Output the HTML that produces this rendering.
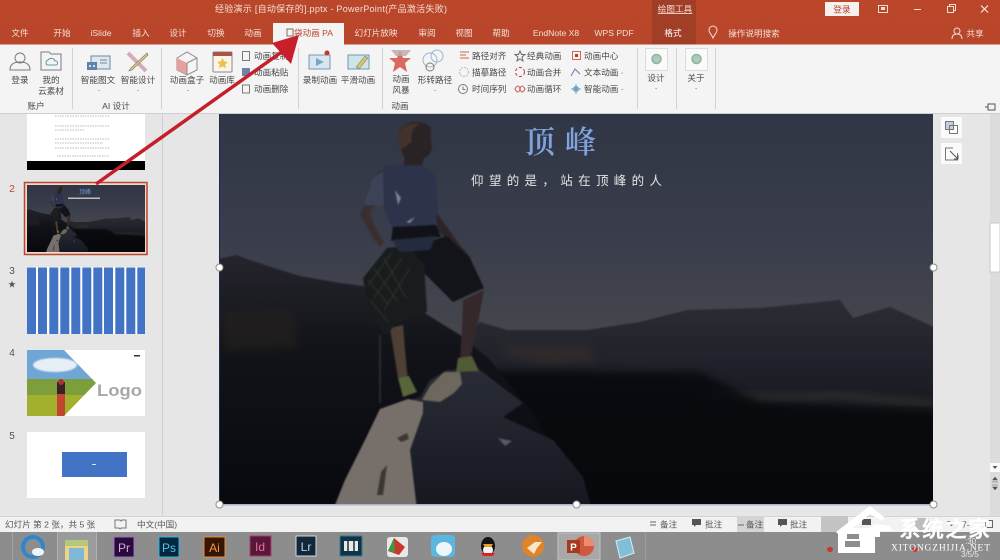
<!DOCTYPE html>
<html lang="zh"><head><meta charset="utf-8"><title>PowerPoint</title>
<style>
html,body{margin:0;padding:0;width:1000px;height:560px;overflow:hidden;background:#e6e6e6}
svg{display:block;font-family:"Liberation Sans","Noto Sans CJK SC",sans-serif}
.t{font-size:8.6px;fill:#f5dfd8}
.r{font-size:8.6px;fill:#4a4a4a}
.m{text-anchor:middle}
.s{font-size:8.6px;fill:#555}
.i{fill:none;stroke:#7b7b7b;stroke-width:1}
</style></head><body>
<svg width="1000" height="560" viewBox="0 0 1000 560" xmlns="http://www.w3.org/2000/svg">
<defs>
<linearGradient id="sky" x1="0" y1="0" x2="0" y2="1"><stop offset="0" stop-color="#2f3544"/><stop offset=".3" stop-color="#383c4b"/><stop offset=".55" stop-color="#44464d"/><stop offset="1" stop-color="#4a4b4e"/></linearGradient>
<linearGradient id="leftm" x1="0" y1="0" x2="0" y2="1"><stop offset="0" stop-color="#25242c"/><stop offset=".35" stop-color="#121319"/><stop offset="1" stop-color="#07080c"/></linearGradient>
<linearGradient id="range" x1="0" y1="0" x2="0" y2="1"><stop offset="0" stop-color="#2b2c34"/><stop offset=".35" stop-color="#1d1f28"/><stop offset=".55" stop-color="#14161a"/><stop offset="1" stop-color="#06070b"/></linearGradient>
<linearGradient id="rockd" x1="0" y1="0" x2="0" y2="1"><stop offset="0" stop-color="#292c36"/><stop offset="1" stop-color="#15171f"/></linearGradient>
<linearGradient id="tb" x1="0" y1="0" x2="0" y2="1"><stop offset="0" stop-color="#bb472a"/><stop offset="1" stop-color="#b8462b"/></linearGradient>
<filter id="soft" x="-5%" y="-5%" width="110%" height="110%" color-interpolation-filters="sRGB"><feGaussianBlur stdDeviation="0.9"/></filter>
<filter id="soft2" x="-20%" y="-20%" width="140%" height="140%" color-interpolation-filters="sRGB"><feGaussianBlur stdDeviation="4"/></filter>
<clipPath id="sl"><rect x="220" y="114" width="713" height="391"/></clipPath>
<clipPath id="t2"><rect x="27" y="185" width="118" height="67"/></clipPath>
<clipPath id="c4"><path d="M27 350h37l32 33-32 33H27z"/></clipPath>
<g id="scene">
<g filter="url(#soft)">
<rect x="205" y="100" width="745" height="420" fill="url(#sky)"/>
<path d="M460 345L480 322 507 330 587 330 640 322 687 310 760 308 840 300 853 318 890 307 945 332V520H460z" fill="url(#range)"/>
<path d="M503 345l84 0 10 16-50 4-40-8z" fill="#3c3129" opacity=".5" filter="url(#soft2)"/>
<path d="M700 392l60 6 80-2 93 8" stroke="#3a4135" stroke-width="7" fill="none" opacity=".55" filter="url(#soft2)"/>
<path d="M470 370L700 372 760 402 945 412V520H470z" fill="#07080c" opacity=".85" filter="url(#soft2)"/>
<path d="M205 262L236 255 265 265 300 276 340 283 363 286 400 296 423 312 460 335 490 360 530 410 600 520H205z" fill="url(#leftm)"/>
<path d="M223 312l70-2 4 38-74 4z" fill="#2e281f" opacity=".4" filter="url(#soft2)"/>
<path d="M335 505L345 480 365 440 380 409 420 397 430 380 447 370 480 370 523 403 503 417 553 440 583 477 592 510H335z" fill="url(#rockd)"/>
<path d="M333 510L345 480 365 440 380 409 408 399 423 402 423 413 410 450 417 510z" fill="#77706a"/>
<path d="M422 400l8-14 14-14 16 0 2 12-8 9-14 9z" fill="#6d675d"/>
<path d="M381 472l6-7-4 30-6 0zM397 438l10-5 2 6-8 3z" fill="#3b3733"/>
<path d="M498 438l14 3-7 5z" fill="#565961"/>
<path d="M380 335v68" stroke="#2f3137" stroke-width="1.500"/>
<path d="M390 328L403 325 405 350 408 382 398 378z" fill="#4e4035"/>
<path d="M398 378L409 376 417 392 403 397z" fill="#59653b"/>
<path d="M463 300L484 290 477 328 470 360 460 360 462 328z" fill="#35282a"/>
<path d="M458 358L472 356 479 371 456 372z" fill="#515b35"/>
<path d="M366 200L360 215 373 238 380 247 384 242 374 225 370 212 376 203z" fill="#3a2e30"/>
<path d="M436 212L460 245 471 258 458 253 437 229z" fill="#2c2428"/>
<path d="M407 248L447 236 470 258 484 288 453 302 423 272z" fill="#131419"/>
<path d="M363 278L387 248 408 246 424 264 427 312 397 322 387 335 370 318z" fill="#191c1c"/>
<g stroke="#39433a" stroke-width="1" fill="none" opacity=".6"><path d="M368 280l20 24M374 268l24 34M384 258l22 40M370 300l18 22M392 252l-24 34M402 258l-28 40M410 268l-26 42"/></g>
<path d="M362 205L373 178 387 165 420 163 435 175 438 205 435 232 393 230 383 206z" fill="#2c334a"/>
<path d="M363 205L373 178 383 172 384 206z" fill="#3d4356"/>
<path d="M393 227L436 225 441 237 391 241z" fill="#111218"/>
<path d="M392 240L436 236 430 250 400 252z" fill="#252b3f"/>
<path d="M395 190l6 8-3 7zM406 222l9-5-5 6z" fill="#7c8396"/>
<path d="M403 165C406 160 404 158 402 152 397 145 397 130 403 126 411 120 426 121 431 128 430 134 431 140 432 148 431 153 428 157 424 158L422 165z" fill="#2a2326"/>
<path d="M400 150c-4-9-2-22 6-25 6-2 10-2 14-1-8 4-10 10-8 17-3 3-6 6-12 9z" fill="#41322d"/>
</g>
</g>
</defs>

<rect width="1000" height="560" fill="#e6e6e6"/>

<rect width="1000" height="44.500" fill="url(#tb)"/>
<rect x="652" y="0" width="44" height="44.500" fill="#a03f26"/>
<text x="215" y="12" class="t" style="font-size:9px" textLength="232">经验演示 [自动保存的].pptx  -  PowerPoint(产品激活失败)</text>
<text x="675" y="12" class="t m" style="text-decoration:underline">绘图工具</text>
<rect x="825" y="2" width="34" height="14" fill="#f6f0ee"/>
<text x="842" y="12.500" class="m" style="font-size:8.6px;fill:#b8472b">登录</text>
<rect x="878.500" y="5.500" width="9" height="7" fill="none" stroke="#f3dcd5"/><rect x="881" y="7" width="4" height="3" fill="#f3dcd5"/>
<rect x="914" y="9" width="7" height="1" fill="#f3dcd5"/>
<rect x="947.500" y="6.500" width="6" height="6" fill="none" stroke="#f3dcd5"/><path d="M949.500 6.500V4.500H955.500V10.500H953.500" fill="none" stroke="#f3dcd5"/>
<path d="M981 5.500L988 12.500M988 5.500L981 12.500" stroke="#f6e6e1" stroke-width="1.200"/>

<text x="20" y="36" class="t m">文件</text>
<text x="62" y="36" class="t m">开始</text>
<text x="101" y="36" class="t m">iSlide</text>
<text x="141" y="36" class="t m">插入</text>
<text x="178" y="36" class="t m">设计</text>
<text x="216" y="36" class="t m">切换</text>
<text x="253" y="36" class="t m">动画</text>
<rect x="273" y="23" width="71" height="22" fill="#f4f4f4"/>
<rect x="287" y="29" width="6" height="7" fill="none" stroke="#8a6a60"/>
<text x="294" y="36" style="font-size:8.6px;fill:#b8472b">袋动画 PA</text>
<text x="376" y="36" class="t m">幻灯片放映</text>
<text x="427" y="36" class="t m">审阅</text>
<text x="464" y="36" class="t m">视图</text>
<text x="501" y="36" class="t m">帮助</text>
<text x="556" y="36" class="t m">EndNote X8</text>
<text x="614" y="36" class="t m">WPS PDF</text>
<text x="673" y="36" class="t m" style="fill:#fff">格式</text>
<path d="M713 38c-1-3-4-5-4-8a4 4 0 0 1 8 0c0 3-3 5-4 8z" fill="none" stroke="#f3dcd5"/>
<text x="754" y="36.500" class="t m">操作说明搜索</text>
<circle cx="957" cy="31" r="3" fill="none" stroke="#f3dcd5"/><path d="M952 39c0-3.500 2-5 5-5s5 1.500 5 5" fill="none" stroke="#f3dcd5"/>
<text x="975" y="36.500" class="t m">共享</text>

<rect y="44.500" width="1000" height="68.500" fill="#f4f4f4"/>
<rect y="113" width="1000" height="1" fill="#cfcfcf"/>
<g fill="#d2d2d2">
<rect x="72" y="48" width="1" height="61"/><rect x="161" y="48" width="1" height="61"/><rect x="298" y="48" width="1" height="61"/><rect x="382" y="48" width="1" height="61"/><rect x="637" y="48" width="1" height="61"/><rect x="676" y="48" width="1" height="61"/><rect x="715" y="48" width="1" height="61"/>
</g>
<circle cx="20" cy="58" r="5" class="i"/><path d="M10 70c0-6 4-8 10-8s10 2 10 8z" class="i"/>
<path d="M41 52h8l2 2h10v16h-20z" class="i" fill="#f8f8f8"/><path d="M47 65a3 3 0 0 1 1-5 4 4 0 0 1 7 1 2 2 0 0 1 1 4z" fill="none" stroke="#5f9ab0"/>
<rect x="91" y="56" width="19" height="13" fill="#dfe7ef" stroke="#6d8aa5"/><rect x="87" y="62" width="10" height="8" fill="#5b85ad"/><circle cx="90" cy="66" r="1" fill="#fff"/><circle cx="94" cy="66" r="1" fill="#fff"/><path d="M100 60h7M100 63h7" stroke="#6d8aa5"/>
<path d="M128 53l18 18" stroke="#d7a9bd" stroke-width="4"/><path d="M147 53l-16 15-2 3 3-1 16-15z" fill="#e9c66f" stroke="#7f7f7f" stroke-width=".7"/>
<path d="M177 58l10-6 10 6v12l-10 5-10-5z" fill="#f5f5f5" stroke="#8a8a8a"/><path d="M177 58l10 5v12l-10-5z" fill="#e9a09c"/><path d="M187 63l10-5M187 63v12" stroke="#8a8a8a"/>
<rect x="213" y="52" width="19" height="20" rx="1" fill="#fbf5e6" stroke="#8a8a8a"/><rect x="213" y="52" width="19" height="4" fill="#a8564b"/><path d="M222.500 58l1.700 3.400 3.800.5-2.800 2.600.7 3.700-3.400-1.800-3.400 1.800.7-3.700-2.800-2.600 3.800-.5z" fill="#e8c24e"/>
<rect x="242.500" y="51.500" width="7" height="9" class="i"/><rect x="242" y="68" width="8" height="8" fill="#6f83a8"/><rect x="242.500" y="85" width="7" height="8" class="i"/>
<text x="254" y="59" class="r">动画复制</text><text x="254" y="75.500" class="r">动画粘贴</text><text x="254" y="92" class="r">动画删除</text>
<rect x="309" y="55" width="21" height="14" fill="#d9e6ef" stroke="#6e9bb5"/><path d="M316 58l8 4-8 4z" fill="#7ba5c5"/><circle cx="327" cy="53" r="2.500" fill="#c0392b"/>
<rect x="348" y="55" width="21" height="14" fill="#cfe4e6" stroke="#6e9bb5"/><path d="M356 67l9-11 3 2-9 11z" fill="#d8c06c" stroke="#666" stroke-width=".5"/>
<path d="M400 50l3 8h8l-6 5 2 9-7-5-7 5 2-9-6-5h8z" fill="#d96a61"/><path d="M391 50h20l-5 6h-10z" fill="#b9a9a9" opacity=".8"/>
<circle cx="437" cy="56" r="6" class="i" style="stroke:#9bb5d2"/><circle cx="430" cy="60" r="7" class="i" style="stroke:#9bb5d2"/><circle cx="430" cy="67" r="4" class="i"/>
<text x="320" y="83" class="r m">录制动画</text><text x="358" y="83" class="r m">平滑动画</text>
<text x="401" y="82" class="r m">动画</text><text x="401" y="93" class="r m">风暴</text><text x="435" y="83" class="r m">形转路径</text><text x="435" y="93" class="r m">·</text>
<text x="400" y="109" class="r m">动画</text>
<text x="20" y="83" class="r m">登录</text><text x="51" y="83" class="r m">我的</text><text x="51" y="94" class="r m">云素材</text>
<text x="36" y="109" class="r m">账户</text>
<text x="98" y="83" class="r m">智能图文</text><text x="138" y="83" class="r m">智能设计</text><text x="99" y="93" class="r m">·</text><text x="138" y="93" class="r m">·</text>
<text x="116" y="109" class="r m">AI 设计</text>
<text x="187" y="83" class="r m">动画盒子</text><text x="222" y="83" class="r m">动画库</text><text x="188" y="93" class="r m">·</text>
<path d="M460 52h9M460 55h6M460 58h9" stroke="#c86a4a"/><circle cx="464" cy="72" r="4.500" class="i" style="stroke:#a9bbd3;stroke-dasharray:2 1"/><circle cx="463" cy="89" r="4.500" class="i"/><path d="M463 86.500v3h2.500" class="i"/>
<text x="472" y="59" class="r">路径对齐</text><text x="472" y="75.500" class="r">描摹路径</text><text x="472" y="92" class="r">时间序列</text>
<path d="M520 51l1.500 3.500h3.500l-3 2.500 1 4-3-2-3 2 1-4-3-2.500h3.500z" fill="none" stroke="#6b6b6b"/><circle cx="520" cy="72" r="4.500" fill="none" stroke="#c0392b" stroke-dasharray="3 2"/><path d="M515 89c2-4 4-4 5 0s3 4 5 0c-2-4-4-4-5 0s-3 4-5 0z" fill="none" stroke="#c95a4a"/>
<text x="527" y="59" class="r">经典动画</text><text x="527" y="75.500" class="r">动画合并</text><text x="527" y="92" class="r">动画循环</text>
<rect x="572.500" y="51.500" width="8" height="8" fill="none" stroke="#c96a5a"/><rect x="575" y="54" width="3" height="3" fill="#c0392b"/><path d="M571 76l4-7 5 5" fill="none" stroke="#8a6fb0"/><circle cx="576" cy="89" r="3" fill="#6ba8c9"/><path d="M576 84v10M571 89h10" stroke="#6ba8c9"/>
<text x="584" y="59" class="r">动画中心</text><text x="584" y="75.500" class="r">文本动画 ·</text><text x="584" y="92" class="r">智能动画 ·</text>
<rect x="645.500" y="48.500" width="22" height="22" fill="#fafafa" stroke="#dcdcdc"/><circle cx="656.500" cy="59" r="4.500" fill="#a9cdb8" stroke="#8fb3a0" stroke-width="1.500"/>
<rect x="685.500" y="48.500" width="22" height="22" fill="#fafafa" stroke="#dcdcdc"/><circle cx="696.500" cy="59" r="4.500" fill="#a9cdb8" stroke="#8fb3a0" stroke-width="1.500"/>
<text x="656" y="81" class="r m">设计</text><text x="656" y="91" class="r m">·</text><text x="696" y="81" class="r m">关于</text><text x="696" y="91" class="r m">·</text>
<path d="M985 107h3M988 104v6h7v-6z" fill="none" stroke="#555"/>

<rect x="162" y="114" width="1" height="403" fill="#cfcfcf"/>
<rect x="27" y="114" width="118" height="47" fill="#fff"/><rect x="27" y="161" width="118" height="9" fill="#000"/>
<g stroke="#a5a5a5" stroke-width=".8" stroke-dasharray="1.500 1">
<path d="M55 116h55M55 126h55M55 130h30M55 139h55M55 143h48M55 148h55M57 156h52"/>
</g>
<rect x="24.500" y="182.500" width="122.500" height="72" fill="#f0d6cf" stroke="#b8472b" stroke-width="1.500"/>
<g clip-path="url(#t2)"><use href="#scene" transform="translate(27 185) scale(.1655 .1714) translate(-220 -114)"/></g>
<text x="85" y="194" class="m" style="font-size:6px;fill:#6f97d6">顶峰</text>
<rect x="68" y="197.500" width="32" height="1.500" fill="#d5d5d5" opacity=".85"/>
<text x="12" y="192" class="m" style="font-size:10px;fill:#b8472b">2</text>
<text x="12" y="274" class="m" style="font-size:10px;fill:#555">3</text>
<text x="12" y="287" class="m" style="font-size:8px;fill:#555">★</text>
<text x="12" y="356" class="m" style="font-size:10px;fill:#555">4</text>
<text x="12" y="439" class="m" style="font-size:10px;fill:#555">5</text>
<rect x="27" y="267" width="118" height="67" fill="#fff"/>
<g fill="#4373c4"><rect x="27" y="267.500" width="9" height="66.500"/><rect x="38" y="267.500" width="9" height="66.500"/><rect x="49.300" y="267.500" width="9" height="66.500"/><rect x="60.300" y="267.500" width="9" height="66.500"/><rect x="71.300" y="267.500" width="9" height="66.500"/><rect x="82.300" y="267.500" width="9" height="66.500"/><rect x="93.300" y="267.500" width="9" height="66.500"/><rect x="104" y="267.500" width="9" height="66.500"/><rect x="115.300" y="267.500" width="9" height="66.500"/><rect x="126.300" y="267.500" width="9" height="66.500"/><rect x="137.300" y="267.500" width="7.700" height="66.500"/></g>
<rect x="27" y="350" width="118" height="66" fill="#fff"/>
<g clip-path="url(#c4)">
<rect x="27" y="350" width="70" height="30" fill="#6fa6d6"/>
<ellipse cx="55" cy="365" rx="22" ry="7" fill="#e8eff4" filter="url(#soft)"/>
<rect x="27" y="379" width="70" height="16" fill="#7d9f3b"/>
<rect x="27" y="395" width="70" height="21" fill="#a3b02e"/>
<rect x="57" y="382" width="8" height="12" fill="#3b2026"/>
<rect x="57" y="394" width="8" height="22" fill="#c2452f"/>
<circle cx="61" cy="382" r="3" fill="#a33"/>
</g>
<text x="97" y="396" style="font-size:17px;font-weight:bold;fill:#a8a8a8" textLength="45" lengthAdjust="spacingAndGlyphs">Logo</text>
<rect x="134" y="355" width="6" height="1.500" fill="#333"/>
<rect x="27" y="432" width="118" height="66" fill="#fff"/>
<rect x="62" y="452" width="65" height="25" fill="#4373c4"/>
<rect x="92" y="464" width="4" height="1" fill="#dbe4f5"/>

<g clip-path="url(#sl)"><use href="#scene"/></g>
<text x="524" y="153" style="font-family:'Noto Serif CJK SC','Liberation Serif',serif;font-size:31px;fill:#7ea3dd;font-weight:600">顶</text>
<text x="565" y="153" style="font-family:'Noto Serif CJK SC','Liberation Serif',serif;font-size:31px;fill:#7ea3dd;font-weight:600">峰</text>
<text x="471" y="185" textLength="191" style="font-size:12.500px;fill:#e4e4e4">仰望的是，站在顶峰的人</text>
<rect x="219.500" y="504" width="714" height="1.500" fill="#a9b6cb"/>
<rect x="219" y="114" width="1" height="391" fill="#1d2a55"/>
<g fill="#fff" stroke="#8f8f8f"><circle cx="219.500" cy="267.500" r="3.500"/><circle cx="933.500" cy="267.500" r="3.500"/><circle cx="219.500" cy="504.500" r="3.500"/><circle cx="576.500" cy="504.500" r="3.500"/><circle cx="933.500" cy="504.500" r="3.500"/></g>

<path d="M96 184L283 51" stroke="#c4202a" stroke-width="3.500" fill="none"/>
<path d="M299 35L272 43 291 64z" fill="#c81f2a"/>

<rect x="941" y="117" width="21" height="21" fill="#fafafa"/><rect x="945.500" y="121.500" width="8" height="8" fill="#c4cfe3" stroke="#777"/><rect x="949.500" y="125.500" width="8" height="8" fill="none" stroke="#777"/>
<rect x="941" y="143" width="21" height="21" fill="#fafafa"/><path d="M953 148h-7.500v12h12v-7" fill="none" stroke="#777"/><path d="M950 151l8 8M958 155v4h-4" fill="none" stroke="#555"/>
<rect x="990" y="114" width="10" height="403" fill="#dcdcdc"/>
<rect x="990" y="223" width="10" height="49" fill="#fff" stroke="#c8c8c8"/>
<rect x="990" y="463" width="10" height="9" fill="#fafafa"/><path d="M992.500 466h5l-2.500 3z" fill="#555"/>
<path d="M995 477l-2.500 3h5zM992 482h6M995 490l-2.500-3h5zM992 485h6" fill="#555" stroke="#555" stroke-width=".5"/>

<rect y="517" width="1000" height="15" fill="#f2f2f2"/>
<rect y="516" width="1000" height="1" fill="#d4d4d4"/>
<text x="5" y="527.500" class="s">幻灯片 第 2 张，共 5 张</text>
<path d="M115 520h5l1 1 1-1h4v8h-5l-1 1-1-1h-4z" fill="none" stroke="#777"/>
<text x="137" y="527.500" class="s">中文(中国)</text>
<rect x="737" y="516" width="27" height="16" fill="#d4d4d4"/><rect x="821" y="516" width="27" height="16" fill="#c4c4c4"/>
<path d="M650 522h6M650 525h6" stroke="#666"/><text x="660" y="527.500" class="s">备注</text>
<path d="M692 519h9v6h-5l-2 2v-2h-2z" fill="#555"/><text x="705" y="527.500" class="s">批注</text>
<path d="M738 525h6" stroke="#666"/><text x="746" y="527.500" class="s">备注</text>
<path d="M778 519h9v6h-5l-2 2v-2h-2z" fill="#555"/><text x="790" y="527.500" class="s">批注</text>
<rect x="862" y="519" width="9" height="6" fill="#555"/><rect x="915" y="518" width="14" height="12" fill="#bdbdbd"/><path d="M947 521l9 2-5 3z" fill="#444"/><text x="962" y="527.500" class="s">7-</text>
<rect x="985.500" y="520.500" width="7" height="7" fill="none" stroke="#666"/>

<rect y="532" width="1000" height="28" fill="#8d8d8d"/>
<rect x="12" y="532" width="1" height="28" fill="#a3a3a3"/>
<rect x="57" y="532" width="39" height="28" fill="#9b9b9b"/><rect x="57" y="532" width="1" height="28" fill="#b0b0b0"/><rect x="96" y="532" width="1" height="28" fill="#b0b0b0"/>
<rect x="558" y="533" width="42" height="27" fill="#a8a8a8" stroke="#c2c2c2"/>
<circle cx="33" cy="547" r="10" fill="none" stroke="#2f86cf" stroke-width="4"/><ellipse cx="38" cy="552" rx="6" ry="4" fill="#eef4f8"/>
<rect x="65" y="540" width="23" height="20" fill="#e9d48a"/><rect x="65" y="540" width="23" height="6" fill="#b6c77e"/><rect x="69" y="548" width="15" height="12" fill="#7fb8d6"/>
<rect x="114" y="537" width="20" height="20" fill="#2a0a3a" stroke="#9b6fc4"/><text x="124" y="552" class="m" style="font-size:12px;fill:#d5a8ea">Pr</text>
<rect x="159" y="537" width="20" height="20" fill="#05283e" stroke="#35b2e6"/><text x="169" y="552" class="m" style="font-size:12px;fill:#4fc3f0">Ps</text>
<rect x="204" y="537" width="21" height="20" fill="#361507" stroke="#e58a35"/><text x="214.500" y="552" class="m" style="font-size:12px;fill:#f19a3f">Ai</text>
<rect x="250" y="536" width="21" height="20" fill="#59183a" stroke="#a73a6d"/><text x="260" y="551" class="m" style="font-size:12px;fill:#e56aa0">Id</text>
<rect x="296" y="536" width="20" height="20" fill="#12273a" stroke="#cfd9e0"/><text x="306" y="551" class="m" style="font-size:12px;fill:#b8d4ea">Lr</text>
<rect x="340" y="536" width="22" height="20" fill="#113344" stroke="#2f7a9a"/><rect x="344" y="541" width="14" height="10" fill="#e8e8e8"/><path d="M348 541v10M354 541v10" stroke="#113344" stroke-width="1.500"/>
<rect x="387" y="537" width="21" height="20" rx="3" fill="#e8e8e8"/><path d="M388 551l6-13 11 9-6 8z" fill="#c9372c"/><path d="M388 551l6-13 1 14z" fill="#3a9a42"/>
<rect x="431" y="535" width="24" height="22" rx="4" fill="#5bb6e0"/><ellipse cx="444" cy="549" rx="8" ry="7" fill="#eef6fa"/>
<ellipse cx="488" cy="546" rx="7" ry="9" fill="#131313"/><ellipse cx="488" cy="550" rx="5" ry="5" fill="#f3f3f3"/><path d="M483 544h10l-2 3h-6z" fill="#e8a021"/><path d="M481 553h14l-2 3h-10z" fill="#d22"/>
<circle cx="533" cy="546" r="11" fill="#e0832a"/><path d="M527 548l8-6 7 0-5 6-3 6z" fill="#f6e7c9"/>
<circle cx="584" cy="546" r="10" fill="#d0583c"/><path d="M584 536a10 10 0 0 1 10 10h-10z" fill="#ec8c6e"/><rect x="567" y="540" width="13" height="13" fill="#a8391f"/><text x="573.500" y="550.500" class="m" style="font-size:10px;font-weight:bold;fill:#fff">P</text>
<path d="M616 541l14-4 4 16-14 5z" fill="#7fc0d6" stroke="#d7ecf2"/>
<rect x="645" y="532" width="1" height="28" fill="#9b9b9b"/>
<ellipse cx="830" cy="549.500" rx="3" ry="2.500" fill="#c33"/><ellipse cx="915" cy="549.500" rx="3" ry="2.500" fill="#c33"/>
<text x="965" y="544" style="font-size:8px;fill:#e8e8e8">:30</text><text x="961" y="557" style="font-size:8px;fill:#e8e8e8">3/5/5</text>

<path d="M836 532L870 506 884 517 882 521 870 514 853 528 870 528 875 524 890 526 893 531 880 531 880 537 875 537 875 553 838 553 838 534z" fill="#fff"/>
<path d="M847 534h12v5h-12zM845 541h15v6h-15z" fill="#8d8d8d"/>
<text x="899" y="537" style="font-size:22px;font-weight:bold;fill:#fff" textLength="91">系统之家</text>
<text x="891" y="550.500" style="font-family:'Liberation Serif',serif;font-size:9.500px;fill:#fff" textLength="99">XITONGZHIJIA.NET</text>
</svg>
</body></html>
